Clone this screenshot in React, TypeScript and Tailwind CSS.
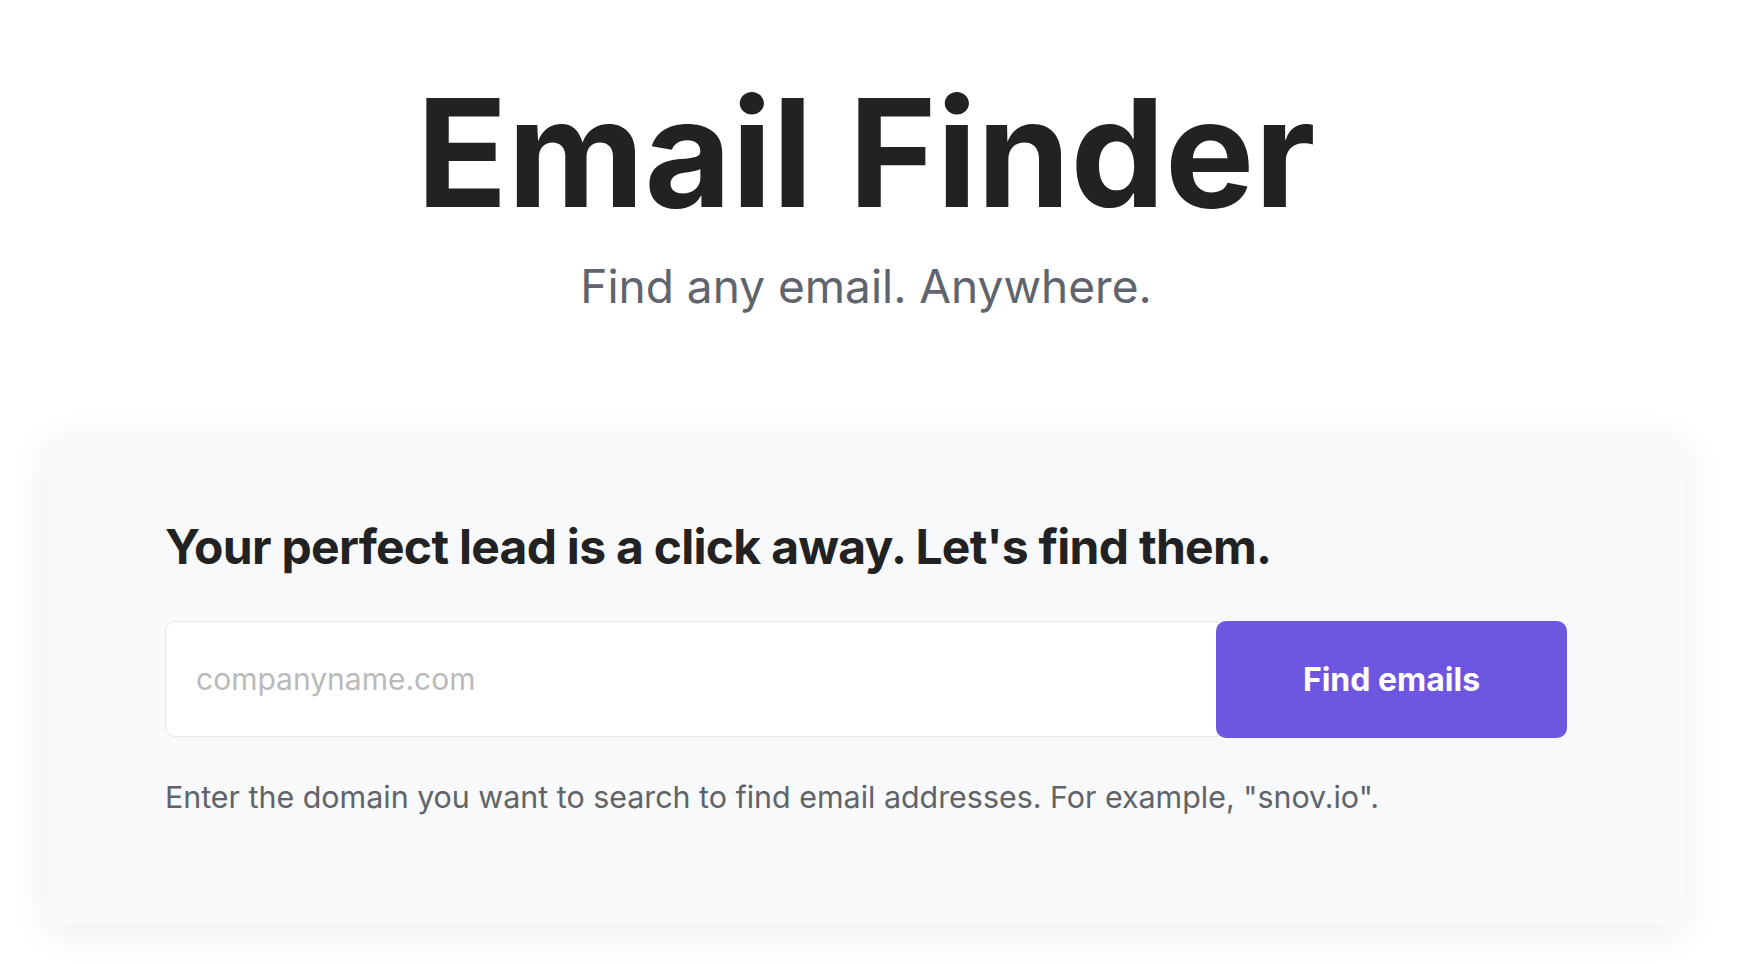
import React from "react";

const App = () => {
  return (
    <div className="min-h-screen bg-white pr-[16px] font-['Inter',sans-serif]">
      <section className="flex flex-col items-center pt-[78px]">
        <h1 className="text-[150px] font-bold leading-none text-[#222222]">
          Email Finder
        </h1>
        <p className="mt-[35px] text-[46px] leading-none text-[#60646c]">
          Find any email. Anywhere.
        </p>
      </section>
      <div className="mx-[48px] mt-[130px] rounded-[10px] bg-[#f8f9fa] px-[117px] pt-[84px] pb-[113px] shadow-[0_6px_40px_rgba(0,0,0,0.08)]">
        <h2 className="text-[48px] font-bold leading-none tracking-[-0.015em] text-[#222222]">
          Your perfect lead is a click away. Let's find them.
        </h2>
        <div className="mt-[50px] flex">
          <input
            type="text"
            placeholder="companyname.com"
            className="-mr-[2px] h-[116px] flex-1 rounded-l-[10px] border border-[#e5e7eb] bg-white pl-[30px] text-[30px] text-[#222222] outline-none placeholder:text-[#bababa]"
          />
          <button className="h-[117px] w-[351px] rounded-[10px] bg-[#6e57e0] text-[32px] font-bold text-white">
            Find emails
          </button>
        </div>
        <p className="mt-[44px] text-[30.4px] leading-none text-[#606368]">
          Enter the domain you want to search to find email addresses. For example, "snov.io".
        </p>
      </div>
    </div>
  );
};

export default App;
